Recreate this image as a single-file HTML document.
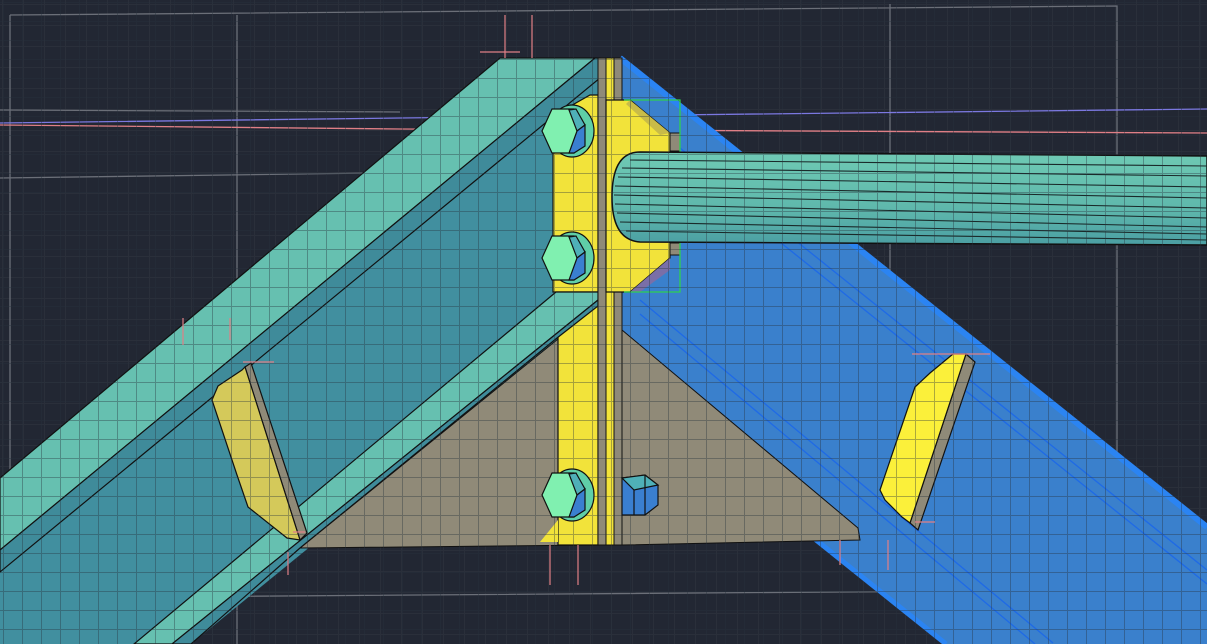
<!DOCTYPE html>
<html><head><meta charset="utf-8"><style>
html,body{margin:0;padding:0;background:#222733;overflow:hidden}
svg{display:block}
</style></head><body>
<svg width="1207" height="644" viewBox="0 0 1207 644" xmlns="http://www.w3.org/2000/svg">
<defs>
<pattern id="g" width="19" height="19" patternUnits="userSpaceOnUse" x="3" y="2">
<path d="M0 0.5H19M0.5 0V19" stroke="rgba(40,50,60,0.38)" stroke-width="1" fill="none"/>
</pattern>
<pattern id="gb" width="21" height="21" patternUnits="userSpaceOnUse" x="2" y="4">
<path d="M0 0.5H21M0.5 0V21" stroke="rgba(255,255,255,0.035)" stroke-width="1" fill="none"/>
</pattern>
<linearGradient id="rod" x1="0" y1="0" x2="0" y2="1">
<stop offset="0" stop-color="#6fcab4"/><stop offset="0.6" stop-color="#5fb8ac"/><stop offset="1" stop-color="#4b9fa3"/>
</linearGradient>
</defs>
<rect width="1207" height="644" fill="#222733"/>
<rect width="1207" height="644" fill="url(#gb)"/>
<g stroke="#6b6f78" stroke-width="1.3" fill="none">
<path d="M10 15 L1117 6 L1117 590 L140 597"/>
<path d="M10 15 V644"/>
<path d="M237 15 V644"/>
<path d="M890 4 V600"/>
<path d="M0 178 L600 170"/>
<path d="M0 110 L400 112"/>
</g>
<path d="M0 123 L400 118 L1207 109" stroke="#7b78e0" stroke-width="1.3" fill="none"/>
<path d="M0 125 L400 129 L1207 133" stroke="#e07f86" stroke-width="1.3" fill="none"/>

<polygon points="620,58 1207,527 1207,644 946,644 620,383" fill="#3a80cc"/>
<path d="M620 58 L1207 527" stroke="#2b84f2" stroke-width="6"/>
<path d="M946 644 L620 383" stroke="#2b84f2" stroke-width="5"/>
<g stroke="#1f6ae6" stroke-width="1.3">
<path d="M620 100 L1207 570"/><path d="M620 114 L1207 584"/>
<path d="M640 300 L1053 643"/><path d="M640 314 L1035 644"/>
</g>

<polygon points="500,58 600,58 600,310 191,644 0,644 0,478" fill="#418f9f"/>
<polygon points="500,58 595,58 0,550 0,478" fill="#66c0b0" stroke="#111" stroke-width="1.2"/>
<polygon points="595,58 600,58 600,78 0,572 0,550" fill="#3f8b9a" stroke="#111" stroke-width="1.2"/>

<polygon points="300,548 600,305 600,545" fill="#908a78" stroke="#111" stroke-width="1"/>
<polygon points="622,330 858,528 860,540 622,545" fill="#908a78" stroke="#111" stroke-width="1"/>

<polygon points="553,116 590,95 598,95 598,292 553,292" fill="#f2e33a" stroke="#111" stroke-width="1.2"/>
<rect x="558" y="300" width="40" height="245" fill="#f2e33a" stroke="#111" stroke-width="1.2"/>
<polygon points="558,520 540,542 558,542" fill="#f2e33a"/>
<polygon points="556,292 598,292 598,300 172,644 134,644" fill="#66c0b0" stroke="#111" stroke-width="1.2"/>
<polygon points="598,300 598,306 557,338 300,548 191,644 172,644" fill="#3f8b9a" stroke="#111" stroke-width="1.2"/>
<rect x="598" y="58" width="8" height="487" fill="#8f8a78" stroke="#111" stroke-width="1"/>
<rect x="606" y="58" width="8" height="487" fill="#f2e33a" stroke="#111" stroke-width="1"/>
<rect x="614" y="58" width="8" height="487" fill="#8f8a78" stroke="#111" stroke-width="1"/>
<polygon points="606,100 630,100 670,133 670,258 630,292 606,292" fill="#f2e33a" stroke="#111" stroke-width="1.2"/>
<polygon points="630,100 670,133 660,135 626,104" fill="#c8bb48"/>
<polygon points="630,292 670,258 670,270 640,292" fill="#7a6fa8"/>
<rect x="670" y="133" width="10" height="18" fill="#8f8a78" stroke="#111"/>
<rect x="670" y="243" width="10" height="12" fill="#8f8a78" stroke="#111"/>
<path d="M624 100 H680 V292 H624" stroke="#2fd050" stroke-width="1.3" fill="none"/>

<path d="M640 152 L1207 156 L1207 245 L640 242 Q612 240 612 197 Q612 152 640 152 Z" fill="url(#rod)" stroke="#111" stroke-width="1.5"/>
<g stroke="#1a2a2a" stroke-width="1.1" fill="none">
<path d="M630 160 L1207 166"/><path d="M622 168 L1207 176"/><path d="M618 177 L1207 187"/>
<path d="M615 186 L1207 198"/><path d="M614 195 L1207 208"/><path d="M615 204 L1207 218"/>
<path d="M617 213 L1207 227"/><path d="M620 222 L1207 234"/><path d="M626 231 L1207 240"/>
</g>

<polygon points="245,367 251,363 307,533 300,540" fill="#8f8a78" stroke="#111" stroke-width="1.2"/>
<polygon points="212,400 218,386 242,370 245,367 300,540 287,538 248,507 237,475" fill="#d4c95a" stroke="#111" stroke-width="1.2"/>
<polygon points="966,354 975,362 918,530 910,523" fill="#8f8a78" stroke="#111" stroke-width="1.2"/>
<polygon points="953,354 966,354 910,523 902,517 885,500 880,490 915,387 930,373" fill="#fbf03a" stroke="#111" stroke-width="1.2"/>

<rect width="1207" height="644" fill="url(#g)"/>

<g id="b1" stroke="#111" stroke-width="1.2">
<ellipse cx="572" cy="131" rx="22" ry="26" fill="#5fcfa8"/>
<polygon points="542,131 552,109 574,109 584,131 574,153 552,153" fill="#80f0b0"/>
<polygon points="569,110 576,109 585,125 577,131" fill="#4fb0b8"/>
<polygon points="577,131 585,125 585,146 574,153 569,153" fill="#3a7fd0"/>
</g>
<use href="#b1" y="127"/>
<use href="#b1" y="364"/>
<g stroke="#111" stroke-width="1.2">
<polygon points="622,478 645,475 658,485 658,505 645,515 622,515" fill="#3a7fd0"/>
<polygon points="622,478 645,475 658,485 634,490" fill="#4fb0b8"/>
<path d="M634 490 V515 M645 475 V515" fill="none"/>
</g>

<g stroke="#e07f86" stroke-width="1.2">
<path d="M505 15 V58 M532 15 V58 M480 52 H520"/>
<path d="M183 318 V345 M230 318 V340 M243 362 H274"/>
<path d="M550 545 V585 M578 545 V585"/>
<path d="M288 552 V575 M293 532 H305"/>
<path d="M840 540 V565 M888 540 V570 M915 522 H935 M912 354 H990"/>
</g>
</svg>
</body></html>
